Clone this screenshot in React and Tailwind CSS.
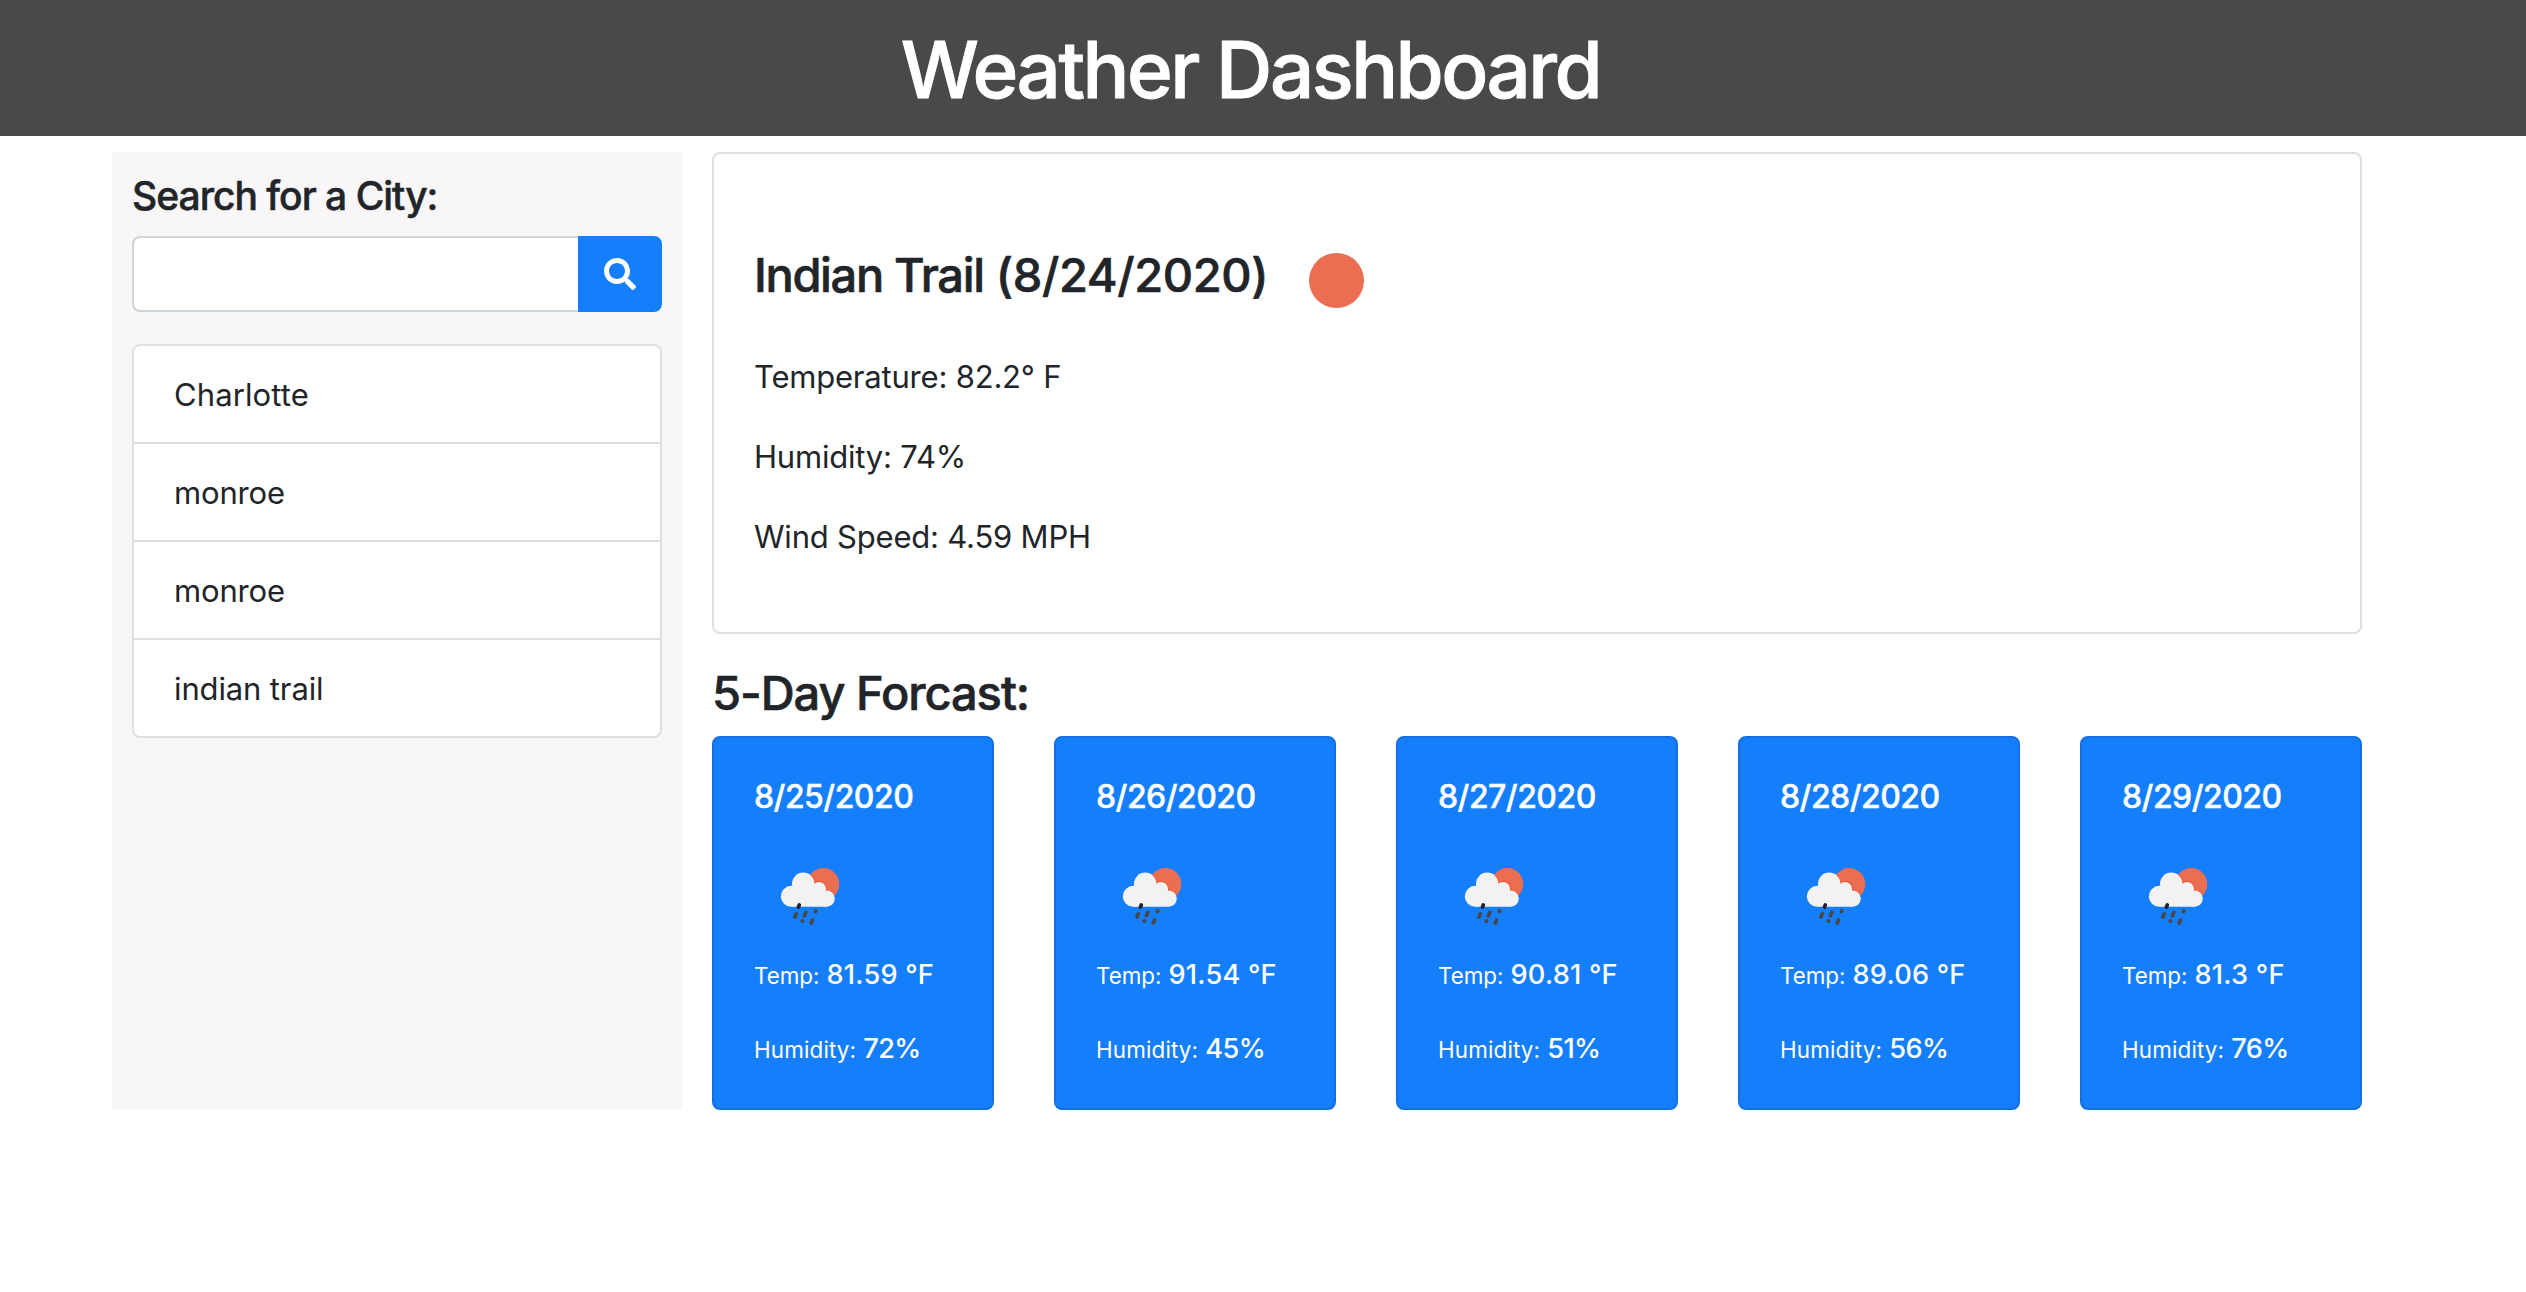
import { FaSearch } from "react-icons/fa";

const cities = [
  { name: "Charlotte", tracking: "tracking-[0.1px]" },
  { name: "monroe", tracking: "tracking-[-0.15px]" },
  { name: "monroe", tracking: "tracking-[-0.15px]" },
  { name: "indian trail", tracking: "tracking-[-0.13px]" },
];

const days = [
  { date: "8/25/2020", temp: "81.59", humidity: 72 },
  { date: "8/26/2020", temp: "91.54", humidity: 45 },
  { date: "8/27/2020", temp: "90.81", humidity: 51 },
  { date: "8/28/2020", temp: "89.06", humidity: 56 },
  { date: "8/29/2020", temp: "81.3", humidity: 76 },
];

function RainIcon() {
  return (
    <svg className="mt-[30px] mb-[8px] block size-[100px]" viewBox="0 0 100 100">
      <defs>
        <clipPath id="sun">
          <circle cx="69.3" cy="38" r="16" />
        </clipPath>
      </defs>
      <circle cx="69.3" cy="38" r="16" fill="#eb6e52" />
      <g clipPath="url(#sun)" fill="#ee5238">
        <circle cx="49" cy="37.5" r="11.6" />
        <circle cx="65" cy="43" r="8" />
        <circle cx="72.7" cy="52.7" r="9" />
      </g>
      <g fill="#f2f2f2">
        <circle cx="37.3" cy="50.3" r="10.5" />
        <circle cx="49.2" cy="37.8" r="11.2" />
        <circle cx="65" cy="43" r="7.1" />
        <circle cx="72.7" cy="52.6" r="8.1" />
        <path d="M37.3 60.7V40L49 38l16 5 7.7 9.6v8.1z" />
      </g>
      <g stroke="#484848" strokeWidth="3.7" strokeLinecap="round">
        <path d="M45.3 59l-.8 2" stroke="#222" />
        <path d="M42.3 67.8l-1.4 3.2" />
        <path d="M51.8 66.5l-1.4 3.2" />
        <path d="M61.8 64.7l-.4.9" />
        <path d="M48.5 74.8l-.2.5" />
        <path d="M58.5 74l-1.3 3" />
      </g>
    </svg>
  );
}

function DayCard({ date, temp, humidity }) {
  return (
    <div className="h-[374px] w-[282px] rounded-[8px] border-2 border-[#1470e2] bg-[#157efb] px-[40px] pt-[40px] whitespace-nowrap text-white">
      <h3 className="text-[32px] leading-[38px] font-medium tracking-[-0.53px] [-webkit-text-stroke:0.4px_currentColor]">{date}</h3>
      <RainIcon />
      <p className="flex items-baseline text-[22.4px] leading-[42px]">
        Temp:
        <span className="ml-[7px] text-[27.2px] font-medium tracking-[0.2px]">{temp} °F</span>
      </p>
      <p className="mt-[31px] flex items-baseline text-[22.4px] leading-[42px] tracking-[0.15px]">
        Humidity:
        <span className="ml-[7px] text-[27.2px] font-medium tracking-[-0.6px]">{humidity}%</span>
      </p>
    </div>
  );
}

export default function App() {
  return (
    <div className="min-h-[1292px] bg-white font-['Inter','Liberation_Sans',sans-serif] text-[#212529]">
      <header className="h-[136px] bg-[#494949] pt-[22px] pr-[25px] text-center">
        <h1 className="text-[78px] leading-[96px] font-medium tracking-[-2.52px] text-white [-webkit-text-stroke:0.9px_currentColor]">Weather Dashboard</h1>
      </header>

      <main className="mt-[16px] ml-[112px] flex">
        <aside className="h-[958px] w-[570px] bg-[#f8f6f7] px-[20px] pt-[20px]">
          <h2 className="text-[39px] leading-[48px] font-medium tracking-[-1px] [-webkit-text-stroke:0.5px_currentColor]">Search for a City:</h2>
          <div className="mt-[16px] flex h-[76px]">
            <input
              type="text"
              aria-label="City"
              className="min-w-0 flex-1 rounded-l-[8px] border-2 border-r-0 border-[#cdd4da] bg-white px-[24px] text-[31px] outline-none"
            />
            <button aria-label="Search" className="flex w-[84px] items-center justify-center rounded-r-[8px] bg-[#157efb] text-white">
              <FaSearch className="size-[32px]" />
            </button>
          </div>
          <ul className="mt-[32px] divide-y-2 divide-[#dfdfdf] rounded-[8px] border-2 border-[#dfdfdf] bg-white">
            {cities.map(({ name, tracking }, i) => (
              <li key={i} className="px-[40px] pt-[25px] pb-[23px] text-[31px] leading-[48px]">
                <span className={tracking}>{name}</span>
              </li>
            ))}
          </ul>
        </aside>

        <div className="ml-[30px] w-[1650px]">
          <section className="h-[482px] rounded-[8px] border-2 border-[#dfdfdf] px-[40px] pt-[92px]">
            <div className="flex h-[58px]">
              <h2 className="text-[47px] leading-[58px] font-medium tracking-[-0.38px] [-webkit-text-stroke:0.6px_currentColor]">
                <span className="tracking-[-1.35px]">Indian Trail</span> (8/24/2020)
              </h2>
              <div className="mt-[7px] ml-[41px] size-[55px] shrink-0 rounded-full bg-[#eb6e52]" />
            </div>
            <div className="mt-[49px] flex flex-col gap-[32px] text-[31px] leading-[48px] tracking-[-0.2px]">
              <p>Temperature: 82.2° F</p>
              <p>Humidity: 74%</p>
              <p>Wind Speed: 4.59 MPH</p>
            </div>
          </section>
          <h2 className="mt-[30px] text-[47px] leading-[58px] font-medium tracking-[-1.05px] [-webkit-text-stroke:0.6px_currentColor]">5-Day Forcast:</h2>
          <div className="mt-[14px] flex justify-between">
            {days.map((day) => (
              <DayCard key={day.date} {...day} />
            ))}
          </div>
        </div>
      </main>
    </div>
  );
}
